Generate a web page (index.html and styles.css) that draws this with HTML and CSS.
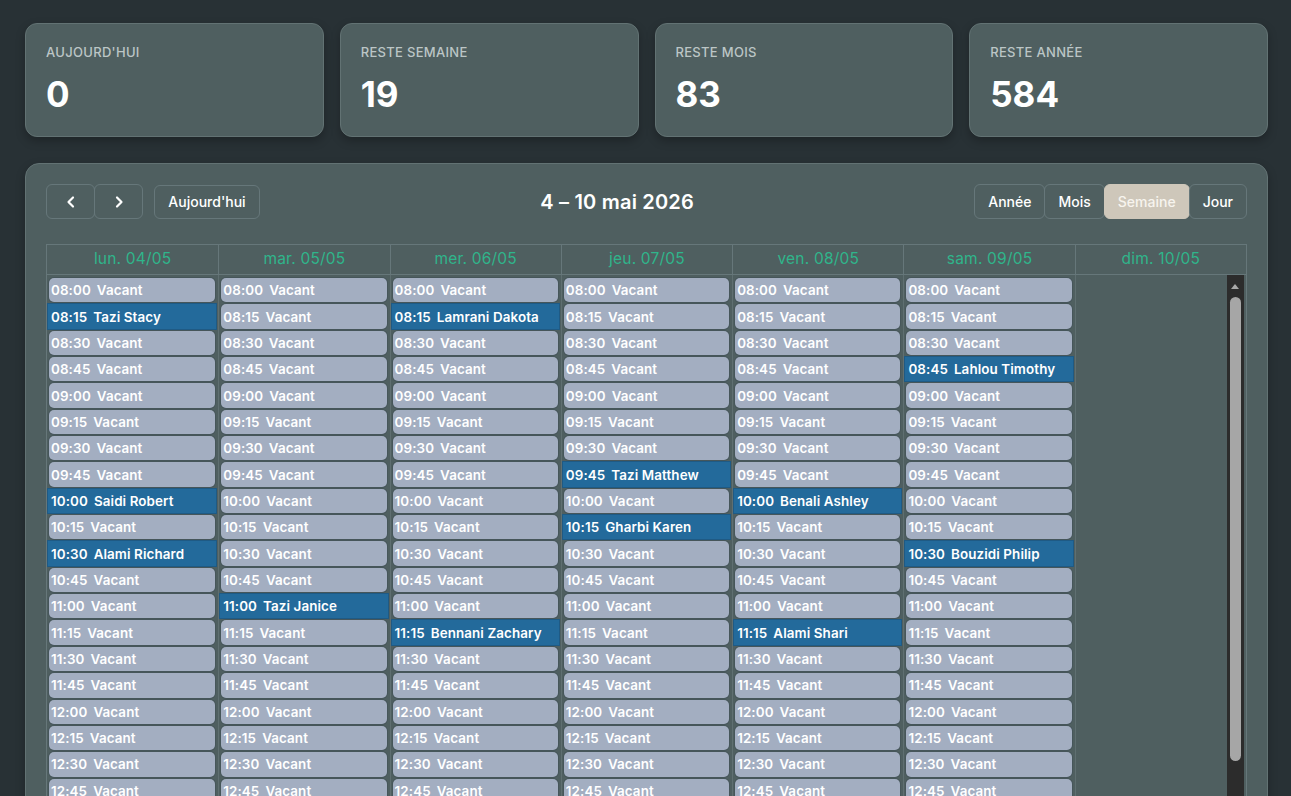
FILE: index.html
```html
<!DOCTYPE html>
<html lang="fr">
<head>
<meta charset="utf-8">
<title>Agenda</title>
<link rel="stylesheet" href="styles.css">
</head>
<body>
<div class="page">
  <div class="stats">
    <div class="stat"><div class="stat-label">Aujourd'hui</div><div class="stat-value">0</div></div>
    <div class="stat"><div class="stat-label">Reste semaine</div><div class="stat-value">19</div></div>
    <div class="stat"><div class="stat-label">Reste mois</div><div class="stat-value">83</div></div>
    <div class="stat"><div class="stat-label">Reste année</div><div class="stat-value">584</div></div>
  </div>

  <section class="cal">
    <div class="toolbar">
      <div class="tb-left">
        <div class="btn-group">
          <button class="btn btn-icon" aria-label="Précédent"><svg width="14" height="14" viewBox="0 0 14 14"><path d="M9 2.5L4.5 7L9 11.5" fill="none" stroke="#fff" stroke-width="2.2" stroke-linecap="round" stroke-linejoin="round"/></svg></button>
          <button class="btn btn-icon" aria-label="Suivant"><svg width="14" height="14" viewBox="0 0 14 14"><path d="M5 2.5L9.5 7L5 11.5" fill="none" stroke="#fff" stroke-width="2.2" stroke-linecap="round" stroke-linejoin="round"/></svg></button>
        </div>
        <button class="btn btn-today">Aujourd'hui</button>
      </div>
      <h2 class="title">4 – 10 mai 2026</h2>
      <div class="btn-group">
        <button class="btn">Année</button>
        <button class="btn">Mois</button>
        <button class="btn active">Semaine</button>
        <button class="btn">Jour</button>
      </div>
    </div>

    <div class="grid">
      <div class="head">
        <div class="hcell">lun. 04/05</div>
        <div class="hcell">mar. 05/05</div>
        <div class="hcell">mer. 06/05</div>
        <div class="hcell">jeu. 07/05</div>
        <div class="hcell">ven. 08/05</div>
        <div class="hcell">sam. 09/05</div>
        <div class="hcell">dim. 10/05</div>
      </div>
      <div class="body">
        <div class="col">
          <div class="ev"><b>08:00</b>Vacant</div>
          <div class="ev booked"><b>08:15</b>Tazi Stacy</div>
          <div class="ev"><b>08:30</b>Vacant</div>
          <div class="ev"><b>08:45</b>Vacant</div>
          <div class="ev"><b>09:00</b>Vacant</div>
          <div class="ev"><b>09:15</b>Vacant</div>
          <div class="ev"><b>09:30</b>Vacant</div>
          <div class="ev"><b>09:45</b>Vacant</div>
          <div class="ev booked"><b>10:00</b>Saidi Robert</div>
          <div class="ev"><b>10:15</b>Vacant</div>
          <div class="ev booked"><b>10:30</b>Alami Richard</div>
          <div class="ev"><b>10:45</b>Vacant</div>
          <div class="ev"><b>11:00</b>Vacant</div>
          <div class="ev"><b>11:15</b>Vacant</div>
          <div class="ev"><b>11:30</b>Vacant</div>
          <div class="ev"><b>11:45</b>Vacant</div>
          <div class="ev"><b>12:00</b>Vacant</div>
          <div class="ev"><b>12:15</b>Vacant</div>
          <div class="ev"><b>12:30</b>Vacant</div>
          <div class="ev"><b>12:45</b>Vacant</div>
          <div class="ev"><b>13:00</b>Vacant</div>
        </div>
        <div class="col">
          <div class="ev"><b>08:00</b>Vacant</div>
          <div class="ev"><b>08:15</b>Vacant</div>
          <div class="ev"><b>08:30</b>Vacant</div>
          <div class="ev"><b>08:45</b>Vacant</div>
          <div class="ev"><b>09:00</b>Vacant</div>
          <div class="ev"><b>09:15</b>Vacant</div>
          <div class="ev"><b>09:30</b>Vacant</div>
          <div class="ev"><b>09:45</b>Vacant</div>
          <div class="ev"><b>10:00</b>Vacant</div>
          <div class="ev"><b>10:15</b>Vacant</div>
          <div class="ev"><b>10:30</b>Vacant</div>
          <div class="ev"><b>10:45</b>Vacant</div>
          <div class="ev booked"><b>11:00</b>Tazi Janice</div>
          <div class="ev"><b>11:15</b>Vacant</div>
          <div class="ev"><b>11:30</b>Vacant</div>
          <div class="ev"><b>11:45</b>Vacant</div>
          <div class="ev"><b>12:00</b>Vacant</div>
          <div class="ev"><b>12:15</b>Vacant</div>
          <div class="ev"><b>12:30</b>Vacant</div>
          <div class="ev"><b>12:45</b>Vacant</div>
          <div class="ev"><b>13:00</b>Vacant</div>
        </div>
        <div class="col">
          <div class="ev"><b>08:00</b>Vacant</div>
          <div class="ev booked"><b>08:15</b>Lamrani Dakota</div>
          <div class="ev"><b>08:30</b>Vacant</div>
          <div class="ev"><b>08:45</b>Vacant</div>
          <div class="ev"><b>09:00</b>Vacant</div>
          <div class="ev"><b>09:15</b>Vacant</div>
          <div class="ev"><b>09:30</b>Vacant</div>
          <div class="ev"><b>09:45</b>Vacant</div>
          <div class="ev"><b>10:00</b>Vacant</div>
          <div class="ev"><b>10:15</b>Vacant</div>
          <div class="ev"><b>10:30</b>Vacant</div>
          <div class="ev"><b>10:45</b>Vacant</div>
          <div class="ev"><b>11:00</b>Vacant</div>
          <div class="ev booked"><b>11:15</b>Bennani Zachary</div>
          <div class="ev"><b>11:30</b>Vacant</div>
          <div class="ev"><b>11:45</b>Vacant</div>
          <div class="ev"><b>12:00</b>Vacant</div>
          <div class="ev"><b>12:15</b>Vacant</div>
          <div class="ev"><b>12:30</b>Vacant</div>
          <div class="ev"><b>12:45</b>Vacant</div>
          <div class="ev"><b>13:00</b>Vacant</div>
        </div>
        <div class="col">
          <div class="ev"><b>08:00</b>Vacant</div>
          <div class="ev"><b>08:15</b>Vacant</div>
          <div class="ev"><b>08:30</b>Vacant</div>
          <div class="ev"><b>08:45</b>Vacant</div>
          <div class="ev"><b>09:00</b>Vacant</div>
          <div class="ev"><b>09:15</b>Vacant</div>
          <div class="ev"><b>09:30</b>Vacant</div>
          <div class="ev booked"><b>09:45</b>Tazi Matthew</div>
          <div class="ev"><b>10:00</b>Vacant</div>
          <div class="ev booked"><b>10:15</b>Gharbi Karen</div>
          <div class="ev"><b>10:30</b>Vacant</div>
          <div class="ev"><b>10:45</b>Vacant</div>
          <div class="ev"><b>11:00</b>Vacant</div>
          <div class="ev"><b>11:15</b>Vacant</div>
          <div class="ev"><b>11:30</b>Vacant</div>
          <div class="ev"><b>11:45</b>Vacant</div>
          <div class="ev"><b>12:00</b>Vacant</div>
          <div class="ev"><b>12:15</b>Vacant</div>
          <div class="ev"><b>12:30</b>Vacant</div>
          <div class="ev"><b>12:45</b>Vacant</div>
          <div class="ev"><b>13:00</b>Vacant</div>
        </div>
        <div class="col">
          <div class="ev"><b>08:00</b>Vacant</div>
          <div class="ev"><b>08:15</b>Vacant</div>
          <div class="ev"><b>08:30</b>Vacant</div>
          <div class="ev"><b>08:45</b>Vacant</div>
          <div class="ev"><b>09:00</b>Vacant</div>
          <div class="ev"><b>09:15</b>Vacant</div>
          <div class="ev"><b>09:30</b>Vacant</div>
          <div class="ev"><b>09:45</b>Vacant</div>
          <div class="ev booked"><b>10:00</b>Benali Ashley</div>
          <div class="ev"><b>10:15</b>Vacant</div>
          <div class="ev"><b>10:30</b>Vacant</div>
          <div class="ev"><b>10:45</b>Vacant</div>
          <div class="ev"><b>11:00</b>Vacant</div>
          <div class="ev booked"><b>11:15</b>Alami Shari</div>
          <div class="ev"><b>11:30</b>Vacant</div>
          <div class="ev"><b>11:45</b>Vacant</div>
          <div class="ev"><b>12:00</b>Vacant</div>
          <div class="ev"><b>12:15</b>Vacant</div>
          <div class="ev"><b>12:30</b>Vacant</div>
          <div class="ev"><b>12:45</b>Vacant</div>
          <div class="ev"><b>13:00</b>Vacant</div>
        </div>
        <div class="col">
          <div class="ev"><b>08:00</b>Vacant</div>
          <div class="ev"><b>08:15</b>Vacant</div>
          <div class="ev"><b>08:30</b>Vacant</div>
          <div class="ev booked"><b>08:45</b>Lahlou Timothy</div>
          <div class="ev"><b>09:00</b>Vacant</div>
          <div class="ev"><b>09:15</b>Vacant</div>
          <div class="ev"><b>09:30</b>Vacant</div>
          <div class="ev"><b>09:45</b>Vacant</div>
          <div class="ev"><b>10:00</b>Vacant</div>
          <div class="ev"><b>10:15</b>Vacant</div>
          <div class="ev booked"><b>10:30</b>Bouzidi Philip</div>
          <div class="ev"><b>10:45</b>Vacant</div>
          <div class="ev"><b>11:00</b>Vacant</div>
          <div class="ev"><b>11:15</b>Vacant</div>
          <div class="ev"><b>11:30</b>Vacant</div>
          <div class="ev"><b>11:45</b>Vacant</div>
          <div class="ev"><b>12:00</b>Vacant</div>
          <div class="ev"><b>12:15</b>Vacant</div>
          <div class="ev"><b>12:30</b>Vacant</div>
          <div class="ev"><b>12:45</b>Vacant</div>
          <div class="ev"><b>13:00</b>Vacant</div>
        </div>
        <div class="col"></div>
        <div class="scrollbar">
          <span class="sb-arrow"></span>
          <span class="sb-thumb"></span>
        </div>
      </div>
    </div>
  </section>
</div>
</body>
</html>
```

FILE: styles.css
```css
* { box-sizing: border-box; }

html, body {
  margin: 0;
  height: 100%;
  overflow: hidden;
}

body {
  background: #283135;
  font-family: "Inter", "DejaVu Sans", sans-serif;
  color: #fff;
}

.page {
  padding: 23px 23px 0 25px;
}

/* ---------- stats ---------- */
.stats {
  display: grid;
  grid-template-columns: repeat(4, 1fr);
  gap: 16px;
}

.stat {
  height: 114px;
  background: #4f5f60;
  border: 1px solid #627273;
  border-radius: 12px;
  padding: 20px 20px 0 20px;
  box-shadow: 0 4px 10px rgba(0, 0, 0, 0.25);
}

.stat-label {
  font-size: 13px;
  font-weight: 500;
  text-transform: uppercase;
  color: #bcc6c6;
  letter-spacing: 0.3px;
  line-height: 16px;
}

.stat-value {
  margin-top: 14px;
  font-size: 35px;
  font-weight: 700;
  line-height: 40px;
  color: #fff;
}

/* ---------- calendar ---------- */
.cal {
  margin-top: 26px;
  background: #4f5f60;
  border: 1px solid #627273;
  border-radius: 14px;
  padding: 20px 20px 0 20px;
  box-shadow: 0 4px 10px rgba(0, 0, 0, 0.25);
}

.toolbar {
  display: flex;
  align-items: center;
  justify-content: space-between;
  height: 35px;
  margin-bottom: 25px;
}

.tb-left {
  display: flex;
  align-items: center;
  gap: 11px;
}

.btn-group {
  display: flex;
}

.btn {
  height: 35px;
  padding: 0 13px;
  background: transparent;
  border: 1px solid #66777a;
  border-radius: 6px;
  color: #fff;
  font-family: inherit;
  font-size: 14px;
  font-weight: 500;
  line-height: 1;
  cursor: pointer;
}

.btn-group .btn + .btn {
  margin-left: -1px;
}

.btn-icon {
  width: 49px;
  padding: 0;
  display: flex;
  align-items: center;
  justify-content: center;
}

.btn-today {
  height: 34px;
  width: 106px;
  padding: 0;
}

.btn.active {
  background: #cec7ba;
  border-color: #cec7ba;
  color: #f7f4ee;
}

.title {
  margin: 0;
  font-size: 20px;
  font-weight: 600;
  color: #fff;
  letter-spacing: 0.2px;
}

/* ---------- grid ---------- */
.grid {
  border: 1px solid #66777a;
  border-bottom: none;
}

.head {
  display: grid;
  grid-template-columns: repeat(7, 1fr);
  height: 30px;
  border-bottom: 1px solid #66777a;
}

.hcell {
  display: flex;
  align-items: center;
  justify-content: center;
  padding-bottom: 2px;
  color: #2fb58b;
  font-size: 15.5px;
  font-weight: 400;
  letter-spacing: 0.2px;
  border-left: 1px solid #66777a;
}

.hcell:first-child { border-left: none; }

.body {
  position: relative;
  display: grid;
  grid-template-columns: repeat(7, 1fr);
  height: 560px;
  overflow: hidden;
}

.col {
  display: flex;
  flex-direction: column;
  gap: 2px;
  padding: 3px 3px 0 2px;
  border-left: 1px solid #5f6f71;
}

.col:first-child { border-left: none; }

.ev {
  flex: 0 0 24.35px;
  display: flex;
  align-items: center;
  gap: 6px;
  padding: 0 2px;
  background: #a3aec1;
  border-radius: 5px;
  color: #fff;
  font-size: 13.4px;
  font-weight: 600;
  letter-spacing: 0.1px;
  white-space: nowrap;
  overflow: hidden;
  box-shadow: 0 0 0 1px #46565a;
}

.ev b { font-weight: 600; }

.ev.booked {
  background: #236a9b;
  border-radius: 0;
  box-shadow: 0 0 0 1px #1f5a84;
  margin: 0 -1px;
  padding: 0 3px;
}

/* scrollbar overlay */
.scrollbar {
  position: absolute;
  top: 0;
  right: 2px;
  bottom: 0;
  width: 17px;
  background: #2c2c2c;
}

.sb-arrow {
  position: absolute;
  top: 9px;
  left: 4px;
  width: 0;
  height: 0;
  border-left: 4.5px solid transparent;
  border-right: 4.5px solid transparent;
  border-bottom: 5px solid #a8a8a8;
}

.sb-thumb {
  position: absolute;
  top: 22px;
  left: 3px;
  width: 11px;
  height: 464px;
  background: #a6a6a6;
  border-radius: 6px;
}
```
